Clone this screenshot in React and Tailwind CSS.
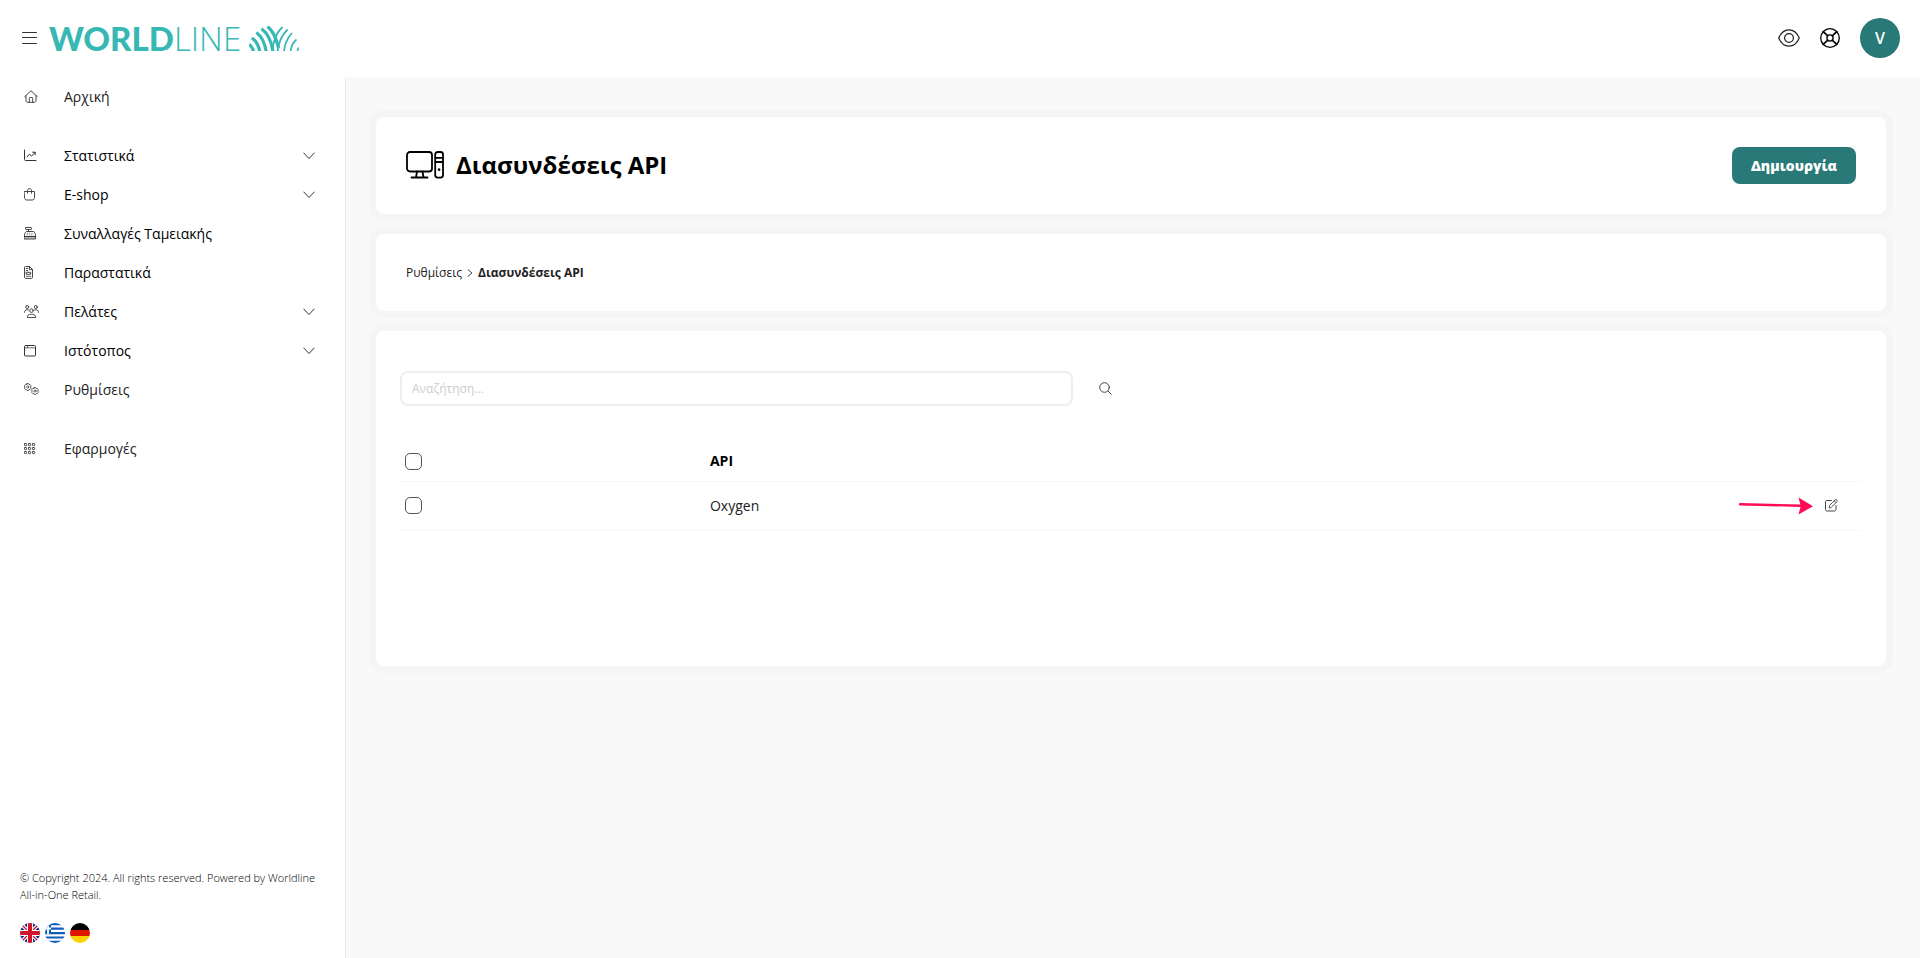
import React from "react";

function Icon({ width, height, strokeWidth = 1, className = "", children }) {
  return (
    <svg
      width={width}
      height={height}
      viewBox={`0 0 ${width} ${height}`}
      fill="none"
      stroke="currentColor"
      strokeWidth={strokeWidth}
      strokeLinecap="round"
      strokeLinejoin="round"
      className={"shrink-0 " + className}
      aria-hidden="true"
    >
      {children}
    </svg>
  );
}

const HomeIcon = () => (
  <Icon width={14} height={13} strokeWidth={0.9}>
    <path d="M.7 6.600 7 .8l6.300 5.800M2 5.600v5c0 1 .7 1.700 1.700 1.700h6.600c1 0 1.700-.7 1.700-1.700v-5M5.300 12.200V8.300c0-.5.3-.8.8-.8h1.800c.5 0 .8.3.8.8v3.900" />
  </Icon>
);
const StatsIcon = () => (
  <Icon width={13} height={13}>
    <path d="M.5 1v9.500c0 .6.4 1 1 1H12M3 8l2.300-2.800 2.400 1.900 3.300-3.600M8.600 3.200h2.600v2.500" />
  </Icon>
);
const BagIcon = () => (
  <Icon width={12} height={13} strokeWidth={0.9}>
    <path d="M.5 3.500h10v6.200c0 1.400-1 2.300-2.300 2.300H2.800C1.500 12 .5 11.100.5 9.700zM3.500 5.200V2.600C3.500 1.400 4.400.6 5.500.6s2 .8 2 2v2.600" />
  </Icon>
);
const RegisterIcon = () => (
  <Icon width={13} height={13} strokeWidth={0.9}>
    <path d="M.5 9.500h11V12H.5z" fill="#cfcfcf" />
    <rect x="1.500" y=".5" width="6" height="2" rx=".6" />
    <path d="M4.500 2.500v2M.5 9.300V7.500L1.500 5.300c.2-.5.6-.8 1.100-.8h6.800c.5 0 .9.300 1.100.8l1 2.200v1.800z" />
    <path d="M3 6.300h6.500M2.500 7.900h7.500" strokeDasharray="1 1.300" strokeWidth=".7" strokeLinecap="butt" />
  </Icon>
);
const DocumentIcon = () => (
  <Icon width={10} height={13} strokeWidth={0.9}>
    <path d="M.5 1.500c0-.6.4-1 1-1h4l3 3v7.900c0 .6-.4 1-1 1h-6c-.6 0-1-.4-1-1zM5.500.6v3h3M2.300 2.500h1.500M2.300 4.500h1.500" />
    <path d="M2.500 6.300h4.200v2H2.500zM2.500 10.300h1.800M5.700 10.300h1" />
  </Icon>
);
const CustomersIcon = () => (
  <Icon width={15} height={13} strokeWidth={0.9}>
    <circle cx="3.200" cy="2" r="1.500" />
    <circle cx="11.800" cy="2" r="1.500" />
    <circle cx="7.500" cy="5.600" r="1.800" />
    <path d="M.5 7.300c0-1.600 1-2.600 2.700-2.600.6 0 1 .1 1.300.3M14.500 7.300c0-1.600-1-2.600-2.700-2.600-.6 0-1 .1-1.300.3M3.400 12.200c0-1.900 1.300-2.900 3-2.900h2.200c1.700 0 3 1 3 2.900z" />
  </Icon>
);
const WindowIcon = () => (
  <Icon width={13} height={12}>
    <rect x=".5" y=".5" width="11" height="10.500" rx="1" />
    <path d="M.5 2.800h11M3.500.6v2" strokeWidth=".7" />
  </Icon>
);
const GearShape = ({ x, y }) => (
  <g transform={`translate(${x} ${y})`}>
    <circle r="1.100" strokeWidth=".7" />
    <path d="M-.7-3.500h1.400l.5 1 1.200.1.9 1.100-.4 1.300.4 1.300-.9 1.100-1.200.1-.5 1h-1.400l-.5-1-1.200-.1-.9-1.100.4-1.300-.4-1.300.9-1.100 1.200-.1z" />
  </g>
);
const SettingsIcon = () => (
  <Icon width={15} height={13} strokeWidth={0.8}>
    <GearShape x={3.7} y={4} />
    <GearShape x={11} y={8} />
  </Icon>
);
const AppsIcon = () => (
  <Icon width={12} height={12} strokeWidth={0.8}>
    {[1.5, 5.5, 9.5].map((y) =>
      [1.5, 5.5, 9.5].map((x) => (
        <rect key={`${x}-${y}`} x={x - 1} y={y - 1} width="2.200" height="2.200" rx=".5" />
      ))
    )}
  </Icon>
);
const ChevronDown = () => (
  <Icon width={12} height={8} className="text-[#333]">
    <path d="M.8 1l5.200 5.500L11.200 1" />
  </Icon>
);

function LogoMark() {
  return (
    <svg width="50" height="25" viewBox="0 0 50 25" fill="none" stroke="#37b8b5" aria-hidden="true">
      <g strokeWidth="3.200">
        <path d="M0 18.500Q3.300 20.500 4.500 25.500" />
        <path d="M2.800 12Q9 16 10.800 25.500" />
        <path d="M7.300 6.500Q15 12 17.200 25.500" />
        <path d="M12.500 2.800Q21.500 9.500 24 25.500" />
        <path d="M18.500 .5Q26 6.500 29.500 22" />
      </g>
      <g strokeWidth="1.800">
        <path d="M33.500 1Q24.500 9 23.500 25" />
        <path d="M38.500 3.500Q30 12 28.600 25.500" />
        <path d="M43 7Q36 14.500 35 25.500" />
        <path d="M47.500 13.500Q42.500 17.500 41.600 25.500" />
        <path d="M50 21.500Q48.800 23 48.500 25.500" />
      </g>
    </svg>
  );
}

function NavItem({ icon, label, tone = "text-black", expandable }) {
  const inner = (
    <>
      <span className="flex w-10 items-center text-[#333]">{icon}</span>
      <span className="flex-1 text-left">{label}</span>
      {expandable && <ChevronDown />}
    </>
  );
  const cls = `flex h-[39px] w-full items-center pl-6 pr-[30px] text-sm ${tone}`;
  return (
    <li>
      {expandable ? (
        <button type="button" aria-expanded="false" className={cls}>{inner}</button>
      ) : (
        <a href="#" className={cls}>{inner}</a>
      )}
    </li>
  );
}

function UkFlag() {
  return (
    <svg width="20" height="20" viewBox="0 0 20 20" aria-hidden="true">
      <clipPath id="uk"><circle cx="10" cy="10" r="10" /></clipPath>
      <g clipPath="url(#uk)">
        <path fill="#0b2a7c" d="M0 0h20v20H0z" />
        <path stroke="#fff" strokeWidth="3.600" d="M0 0l20 20M20 0L0 20" />
        <path stroke="#d0142c" strokeWidth="1.300" d="M0 0l20 20M20 0L0 20" />
        <path stroke="#fff" strokeWidth="6" d="M10 0v20M0 10h20" />
        <path stroke="#d0142c" strokeWidth="4" d="M10 0v20M0 10h20" />
      </g>
    </svg>
  );
}
function GreekFlag() {
  return (
    <svg width="20" height="20" viewBox="0 0 20 20" aria-hidden="true">
      <clipPath id="gr"><circle cx="10" cy="10" r="10" /></clipPath>
      <g clipPath="url(#gr)">
        <path fill="#fff" d="M0 0h20v20H0z" />
        <path fill="#0d5eb8" d="M0 0h20v2.200H0zM0 4.500h20v2.200H0zM0 9h20v2.200H0zM0 13.400h20v2.200H0zM0 17.800h20V20H0zM0 0h6v11.200H0z" />
        <path stroke="#fff" strokeWidth="1.800" d="M3 0v11M0 5.500h6" />
      </g>
    </svg>
  );
}
function GermanFlag() {
  return (
    <svg width="20" height="20" viewBox="0 0 20 20" aria-hidden="true">
      <clipPath id="de"><circle cx="10" cy="10" r="10" /></clipPath>
      <g clipPath="url(#de)">
        <path fill="#000" d="M0 0h20v7H0z" />
        <path fill="#e01500" d="M0 7h20v6H0z" />
        <path fill="#ffd000" d="M0 13h20v7H0z" />
      </g>
    </svg>
  );
}

function Card({ className = "", children }) {
  return (
    <section className={"rounded-lg bg-white ring-7 ring-[#f5f5f5] " + className}>{children}</section>
  );
}

function Checkbox({ label }) {
  return (
    <input
      type="checkbox"
      aria-label={label}
      className="block size-[17px] appearance-none rounded-[5px] border border-[#555] bg-white checked:bg-[#287977]"
    />
  );
}

export default function App() {
  return (
    <div className="flex min-h-screen flex-col bg-white font-['Open_Sans','Noto_Sans',sans-serif] text-[#222]">
      <header className="flex h-[77px] items-center justify-between pr-5 pb-px pl-[22px]">
        <div className="flex items-center gap-3">
          <button type="button" aria-label="Menu" className="text-[#333]">
            <Icon width={15} height={12}>
              <path d="M.5 .5h14M.5 5.500h14M.5 11.500h14" />
            </Icon>
          </button>
          <a href="#" aria-label="Worldline" className="flex items-center gap-2 text-[#37b8b5]">
            <span className="flex items-baseline text-[33px] leading-none">
              <span className="font-[Lato] font-black">WORLD</span>
              <span className="font-light">LINE</span>
            </span>
            <LogoMark />
          </a>
        </div>
        <div className="flex items-center gap-5">
          <button type="button" aria-label="Preview" className="text-[#222]">
            <Icon width={22} height={18} strokeWidth={1.2}>
              <path d="M.7 9C2.800 4.200 6.600.9 11 .9S19.200 4.200 21.300 9c-2.100 4.800-5.900 8.100-10.300 8.100S2.800 13.800.7 9z" />
              <circle cx="11" cy="9" r="4.400" />
            </Icon>
          </button>
          <button type="button" aria-label="Help" className="text-black">
            <Icon width={20} height={20} strokeWidth={1.3}>
              <circle cx="10" cy="10" r="9.300" />
              <circle cx="10" cy="10" r="3.100" />
              <path d="M3.200 3.600l4.600 4.200M16.800 3.600l-4.600 4.200M3.200 16.400l4.600-4.200M16.800 16.400l-4.600-4.200" strokeWidth="1.700" />
            </Icon>
          </button>
          <button type="button" aria-label="Account" className="flex size-10 items-center justify-center rounded-full bg-[#287977] text-base font-semibold text-white">
            V
          </button>
        </div>
      </header>

      <div className="flex flex-1">
        <aside className="flex w-[346px] shrink-0 flex-col justify-between border-r border-[#e8e8e8]">
          <nav>
            <ul>
              <NavItem icon={<HomeIcon />} label="Αρχική" tone="text-[#222]" />
            </ul>
            <ul className="mt-5">
              <NavItem icon={<StatsIcon />} label="Στατιστικά" expandable />
              <NavItem icon={<BagIcon />} label="E-shop" expandable />
              <NavItem icon={<RegisterIcon />} label="Συναλλαγές Ταμειακής" />
              <NavItem icon={<DocumentIcon />} label="Παραστατικά" />
              <NavItem icon={<CustomersIcon />} label="Πελάτες" expandable />
              <NavItem icon={<WindowIcon />} label="Ιστότοπος" expandable />
              <NavItem icon={<SettingsIcon />} label="Ρυθμίσεις" tone="text-[#222]" />
            </ul>
            <ul className="mt-5">
              <NavItem icon={<AppsIcon />} label="Εφαρμογές" tone="text-[#222]" />
            </ul>
          </nav>
          <footer className="px-5 pb-[15px]">
            <p className="text-[11px] leading-[17px] font-light text-black">
              © Copyright 2024. All rights reserved. Powered by Worldline All-in-One Retail.
            </p>
            <div className="mt-5 flex gap-[5px]">
              <a href="#" aria-label="English"><UkFlag /></a>
              <a href="#" aria-label="Ελληνικά"><GreekFlag /></a>
              <a href="#" aria-label="Deutsch"><GermanFlag /></a>
            </div>
          </footer>
        </aside>

        <main className="flex flex-1 flex-col gap-5 bg-[#f9f9f9] pt-10 pr-[34px] pl-[30px]">
          <Card className="flex items-start justify-between p-[30px]">
            <h1 className="flex items-center gap-3 text-2xl leading-[35px] font-bold text-black">
              <Icon width={38} height={28} strokeWidth={1.8}>
                <rect x="1" y="1" width="25" height="19.500" rx="3" />
                <path d="M11 20.500l-1 6M16.500 20.500l1 6M5.500 26.500h16" />
                <rect x="29.200" y="1" width="7.800" height="25.600" rx="2.500" />
                <path d="M29.500 6.800h7M29.500 11h7" />
                <path d="M33.100 18.500v.2" strokeWidth="2.600" />
              </Icon>
              Διασυνδέσεις API
            </h1>
            <button type="button" className="h-[37px] rounded-lg bg-[#287977] px-[19px] text-sm font-extrabold text-white">
              Δημιουργία
            </button>
          </Card>

          <Card className="p-[30px]">
            <nav aria-label="Breadcrumb" className="flex items-center gap-[5px] text-xs leading-[17px]">
              <a href="#">Ρυθμίσεις</a>
              <Icon width={6} height={8} strokeWidth={0.9}>
                <path d="M1 .6 4.900 4 1 7.400" />
              </Icon>
              <span aria-current="page" className="font-bold">Διασυνδέσεις API</span>
            </nav>
          </Card>

          <Card className="px-6 pt-10 pb-[135px]">
            <form className="flex items-center gap-[26px]" onSubmit={(e) => e.preventDefault()}>
              <input
                type="text"
                aria-label="Αναζήτηση"
                placeholder="Αναζήτηση..."
                className="h-[35px] w-[46%] rounded-lg border-2 border-[#eee] px-[10px] text-xs outline-none placeholder:text-[#ccc]"
              />
              <button type="submit" aria-label="Αναζήτηση" className="text-[#444]">
                <Icon width={13} height={13}>
                  <circle cx="5.500" cy="5.500" r="4.800" />
                  <path d="M9 9l3.300 3.300" />
                </Icon>
              </button>
            </form>

            <table className="mt-[36px] w-full table-fixed text-left text-sm">
              <thead>
                <tr className="h-[39px] border-b border-[#f7f7f7]">
                  <th className="w-[21.2%] pl-[5px]"><Checkbox label="Επιλογή όλων" /></th>
                  <th className="font-bold text-black">API</th>
                  <th className="w-[140px]" />
                </tr>
              </thead>
              <tbody>
                <tr className="h-[49px] border-b border-[#f7f7f7]">
                  <td className="pl-[5px]"><Checkbox label="Oxygen" /></td>
                  <td>Oxygen</td>
                  <td>
                    <div className="flex items-center justify-end gap-3 pr-6">
                      <svg width="74" height="18" viewBox="0 0 74 18" aria-hidden="true">
                        <path d="M1 7.300 62 8.700" stroke="#ff0a54" strokeWidth="2.400" strokeLinecap="round" />
                        <path d="M59.500.5 74 9.200 59.500 17.500 61.800 8.900z" fill="#ff0a54" />
                      </svg>
                      <button type="button" aria-label="Επεξεργασία" className="text-[#444]">
                        <Icon width={13} height={13}>
                          <path d="M6.500 1.500H2c-.8 0-1.500.7-1.500 1.500v7.500c0 .8.7 1.500 1.500 1.500h7.500c.8 0 1.500-.7 1.500-1.500V6.500" />
                          <path d="M4.200 8.700l.4-2.300L10.200.8c.4-.4 1-.4 1.400 0l.4.400c.4.400.4 1 0 1.400L6.500 8.200zM9.200 1.900l1.800 1.800" strokeWidth=".9" />
                        </Icon>
                      </button>
                    </div>
                  </td>
                </tr>
              </tbody>
            </table>
          </Card>
        </main>
      </div>
    </div>
  );
}
